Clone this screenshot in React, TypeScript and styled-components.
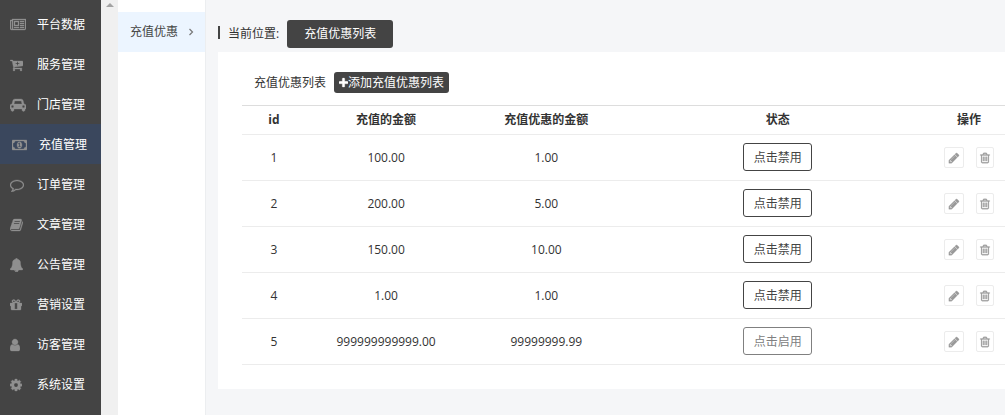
import React from "react";
import styled, { createGlobalStyle } from "styled-components";

const GlobalStyle = createGlobalStyle`
  *, *::before, *::after { box-sizing: border-box; }
  body {
    margin: 0;
    background: #f5f6f8;
    color: #333;
    font: 12px/20px "Open Sans", "Noto Sans CJK SC", sans-serif;
  }
  button { font: inherit; cursor: pointer; }
  a { color: inherit; text-decoration: none; }
`;

type Glyph = { x?: number; w: number; d: string };

const glyphs: Record<string, Glyph> = {
  newspaper: { w: 2048, d: "M1024 512h-384v384h384v-384zm128 640v128h-640v-128h640zm0-768v640h-640v-640h640zm640 768v128h-512v-128h512zm0-256v128h-512v-128h512zm0-256v128h-512v-128h512zm0-256v128h-512v-128h512zm-1536 960v-960h-128v960q0 26 19 45t45 19 45-19 19-45zm1664 0v-1088h-1536v1088q0 33-11 64h1483q26 0 45-19t19-45zm128-1216v1216q0 80-56 136t-136 56h-1664q-80 0-136-56t-56-136v-1088h256v-128h1792z" },
  cart: { x: 64, w: 1664, d: "M1280 704q0-26-19-45t-45-19h-128v-128q0-26-19-45t-45-19-45 19-19 45v128h-128q-26 0-45 19t-19 45 19 45 45 19h128v128q0 26 19 45t45 19 45-19 19-45v-128h128q26 0 45-19t19-45zm-576 832q0 53-37.5 90.5t-90.5 37.5-90.5-37.5-37.5-90.5 37.5-90.5 90.5-37.5 90.5 37.5 37.5 90.5zm896 0q0 53-37.5 90.5t-90.5 37.5-90.5-37.5-37.5-90.5 37.5-90.5 90.5-37.5 90.5 37.5 37.5 90.5zm128-1088v512q0 24-16.5 42.5t-40.5 21.5l-1044 122q13 60 13 70 0 16-24 64h920q26 0 45 19t19 45-19 45-45 19h-1024q-26 0-45-19t-19-45q0-11 8-31.5t16-36 21.5-40 15.5-29.5l-177-823h-204q-26 0-45-19t-19-45 19-45 45-19h256q16 0 28.5 6.5t19.5 15.5 13 24.5 8 26 5.5 29.5 4.5 26h1201q26 0 45 19t19 45z" },
  car: { w: 2048, d: "M480 1088q0-66-47-113t-113-47-113 47-47 113 47 113 113 47 113-47 47-113zm36-320h1016l-89-357q-2-8-14-17.5t-21-9.5h-768q-9 0-21 9.5t-14 17.5zm1372 320q0-66-47-113t-113-47-113 47-47 113 47 113 113 47 113-47 47-113zm160-96v384q0 14-9 23t-23 9h-96v128q0 80-56 136t-136 56-136-56-56-136v-128h-1024v128q0 80-56 136t-136 56-136-56-56-136v-128h-96q-14 0-23-9t-9-23v-384q0-93 65.5-158.5t158.5-65.5h28l105-419q23-94 104-157.5t179-63.5h768q98 0 179 63.5t104 157.5l105 419h28q93 0 158.5 65.5t65.5 158.5z" },
  money: { w: 1920, d: "M768 1152h384v-96h-128v-448h-114l-148 137 77 80q42-37 55-57h2v288h-128v96zm512-256q0 70-21 142t-59.5 134-101.5 101-138 39-138-39-101.5-101-59.5-134-21-142 21-142 59.5-134 101.5-101 138-39 138 39 101.5 101 59.5 134 21 142zm512 256v-512q-106 0-181-75t-75-181h-1152q0 106-75 181t-181 75v512q106 0 181 75t75 181h1152q0-106 75-181t181-75zm128-832v1152q0 26-19 45t-45 19h-1792q-26 0-45-19t-19-45v-1152q0-26 19-45t45-19h1792q26 0 45 19t19 45z" },
  comment: { w: 1792, d: "M896 384q-204 0-381.5 69.5t-282 187.5-104.5 255q0 112 71.5 213.5t201.5 175.5l87 50-27 96q-24 91-70 172 152-63 275-171l43-38 57 6q69 8 130 8 204 0 381.5-69.5t282-187.5 104.5-255-104.5-255-282-187.5-381.5-69.5zm896 512q0 174-120 321.5t-326 233-450 85.5q-70 0-145-8-198 175-460 242-49 14-114 22h-5q-15 0-27-10.5t-16-27.5v-1q-3-4-.5-12t2-10 4.5-9.5l6-9 7-8.5 8-9q7-8 31-34.5t34.5-38 31-39.5 32.5-51 27-59 26-76q-157-89-247.5-220t-90.5-281q0-130 71-248.5t191-204.5 286-136.5 348-50.5 348 50.5 286 136.5 191 204.5 71 248.5z" },
  book: { x: 64, w: 1664, d: "M1703 478q40 57 18 129l-275 906q-19 64-76.5 107.5t-122.5 43.5h-923q-77 0-148.5-53.5t-99.5-131.5q-24-67-2-127 0-4 3-27t4-37q1-8-3-21.5t-3-19.5q2-11 8-21t16.5-23.5 16.5-23.5q23-38 45-91.5t30-91.5q3-10 .5-30t-.5-28q3-11 17-28t17-23q21-36 42-92t25-90q1-9-2.5-32t.5-28q4-13 22-30.5t22-22.5q19-26 42.5-84.5t27.5-96.5q1-8-3-25.5t-2-26.5q2-8 9-18t18-23 17-21q8-12 16.5-30.5t15-35 16-36 19.5-32 26.5-23.5 36-11.5 47.5 5.5l-1 3q38-9 51-9h761q74 0 114 56t18 130l-274 906q-36 119-71.5 153.5t-128.5 34.5h-869q-27 0-38 15-11 16-1 43 24 70 144 70h923q29 0 56-15.5t35-41.5l300-987q7-22 5-57 38 15 59 43zm-1064 2q-4 13 2 22.5t20 9.5h608q13 0 25.5-9.5t16.5-22.5l21-64q4-13-2-22.5t-20-9.5h-608q-13 0-25.5 9.5t-16.5 22.5zm-83 256q-4 13 2 22.5t20 9.5h608q13 0 25.5-9.5t16.5-22.5l21-64q4-13-2-22.5t-20-9.5h-608q-13 0-25.5 9.5t-16.5 22.5z" },
  bell: { x: 64, w: 1664, d: "M912 1696q0-16-16-16-59 0-101.5-42.5t-42.5-101.5q0-16-16-16t-16 16q0 73 51.5 124.5t124.5 51.5q16 0 16-16zm816-288q0 52-38 90t-90 38h-448q0 106-75 181t-181 75-181-75-75-181h-448q-52 0-90-38t-38-90q50-42 91-88t85-119.5 74.5-158.5 50-206 19.5-260q0-152 117-282.5t307-158.5q-8-19-8-39 0-40 28-68t68-28 68 28 28 68q0 20-8 39 190 28 307 158.5t117 282.5q0 139 19.5 260t50 206 74.5 158.5 85 119.5 91 88z" },
  gift: { x: 128, w: 1536, d: "M1056 1356v-716h-320v716q0 25 18 38.5t46 13.5h192q28 0 46-13.5t18-38.5zm-456-844h195l-126-161q-26-31-69-31-40 0-68 28t-28 68 28 68 68 28zm688-96q0-40-28-68t-68-28q-43 0-69 31l-125 161h194q40 0 68-28t28-68zm376 256v320q0 14-9 23t-23 9h-96v416q0 40-28 68t-68 28h-1088q-40 0-68-28t-28-68v-416h-96q-14 0-23-9t-9-23v-320q0-14 9-23t23-9h440q-93 0-158.5-65.5t-65.5-158.5 65.5-158.5 158.5-65.5q107 0 168 77l128 165 128-165q61-77 168-77 93 0 158.5 65.5t65.5 158.5-65.5 158.5-158.5 65.5h440q14 0 23 9t9 23z" },
  user: { x: 256, w: 1280, d: "M1536 1399q0 109-62.5 187t-150.5 78h-854q-88 0-150.5-78t-62.5-187q0-85 8.5-160.5t31.5-152 58.5-131 94-89 134.5-34.5q131 128 313 128t313-128q76 0 134.5 34.5t94 89 58.5 131 31.5 152 8.5 160.5zm-256-887q0 159-112.5 271.5t-271.5 112.5-271.5-112.5-112.5-271.5 112.5-271.5 271.5-112.5 271.5 112.5 112.5 271.5z" },
  cog: { x: 128, w: 1536, d: "M1152 896q0-106-75-181t-181-75-181 75-75 181 75 181 181 75 181-75 75-181zm512-109v222q0 12-8 23t-20 13l-185 28q-19 54-39 91 35 50 107 138 10 12 10 25t-9 23q-27 37-99 108t-94 71q-12 0-26-9l-138-108q-44 23-91 38-16 136-29 186-7 28-36 28h-222q-14 0-24.5-8.5t-11.5-21.5l-28-184q-49-16-90-37l-141 107q-10 9-25 9-14 0-25-11-126-114-165-168-7-10-7-23 0-12 8-23 15-21 51-66.5t54-70.5q-27-50-41-99l-183-27q-13-2-21-12.5t-8-23.5v-222q0-12 8-23t19-13l186-28q14-46 39-92-40-57-107-138-10-12-10-24 0-10 9-23 26-36 98.5-107.5t94.5-71.5q13 0 26 10l138 107q44-23 91-38 16-136 29-186 7-28 36-28h222q14 0 24.5 8.5t11.5 21.5l28 184q49 16 90 37l142-107q9-9 24-9 13 0 25 10 129 119 165 170 7 8 7 22 0 12-8 23-15 21-51 66.5t-54 70.5q26 50 41 98l183 28q13 2 21 12.5t8 23.5z" },
  pencil: { w: 1792, d: "M491 1536l91-91-235-235-91 91v107h128v128h107zm523-928q0-22-22-22-10 0-17 7l-542 542q-7 7-7 17 0 22 22 22 10 0 17-7l542-542q7-7 7-17zm-54-192l416 416-832 832h-416v-416zm683 96q0 53-37 90l-166 166-416-416 166-165q36-38 90-38 53 0 91 38l235 234q37 39 37 91z" },
  trash: { w: 1792, d: "M704 736v576q0 14-9 23t-23 9h-64q-14 0-23-9t-9-23v-576q0-14 9-23t23-9h64q14 0 23 9t9 23zm256 0v576q0 14-9 23t-23 9h-64q-14 0-23-9t-9-23v-576q0-14 9-23t23-9h64q14 0 23 9t9 23zm256 0v576q0 14-9 23t-23 9h-64q-14 0-23-9t-9-23v-576q0-14 9-23t23-9h64q14 0 23 9t9 23zm128 724v-948h-896v948q0 22 7 40.5t14.5 27 10.5 8.5h832q3 0 10.5-8.5t14.5-27 7-40.5zm-672-1076h448l-48-117q-7-9-17-11h-317q-10 2-17 11zm928 32v64q0 14-9 23t-23 9h-96v948q0 83-47 143.5t-113 60.5h-832q-66 0-113-58.5t-47-141.5v-952h-96q-14 0-23-9t-9-23v-64q0-14 9-23t23-9h309l70-167q15-37 54-63t79-26h320q40 0 79 26t54 63l70 167h309q14 0 23 9t9 23z" },
  plus: { x: 192, w: 1408, d: "M1600 736v192q0 40-28 68t-68 28h-416v416q0 40-28 68t-68 28h-192q-40 0-68-28t-28-68v-416h-416q-40 0-68-28t-28-68v-192q0-40 28-68t68-28h416v-416q0-40 28-68t68-28h192q40 0 68 28t28 68v416h416q40 0 68 28t28 68z" },
};

const Svg = styled.svg`
  display: block;
  flex: none;
  fill: currentColor;
`;

function Icon({ name, size = 14 }: { name: string; size?: number }) {
  const { x = 0, w, d } = glyphs[name];
  return (
    <Svg
      width={Math.round((w / 1792) * size)}
      height={size}
      viewBox={`${x} 0 ${w} 1792`}
      aria-hidden="true"
    >
      <path d={d} stroke="currentColor" strokeWidth="40" />
    </Svg>
  );
}

const Layout = styled.div`
  display: flex;
  min-height: 100vh;
`;

const Sidebar = styled.nav`
  flex: none;
  width: 101px;
  padding-top: 4px;
  background: #444;
`;

const NavItem = styled.a<{ $active?: boolean }>`
  display: flex;
  align-items: center;
  height: 40px;
  padding-top: 2px;
  padding-left: ${(p) => (p.$active ? 12 : 10)}px;
  background: ${(p) => (p.$active ? "#3a475d" : "transparent")};
  color: #fff;
`;

const NavIcon = styled.span`
  flex: none;
  width: 27px;
  color: #8f8f8f;
`;

const ScrollTrack = styled.div`
  flex: none;
  display: flex;
  justify-content: center;
  width: 17px;
  padding-top: 3px;
  background: #f0f0f0;
  color: #a3a3a3;
`;

const SubMenu = styled.nav`
  flex: none;
  width: 88px;
  padding-top: 12px;
  background: #fff;
  border-right: 1px solid #eceef0;
`;

const SubItem = styled.a`
  display: flex;
  align-items: center;
  justify-content: space-between;
  height: 40px;
  padding: 0 11px 0 12px;
  background: #ecf5ff;
  color: #444;
`;

const Main = styled.main`
  flex: 1;
  min-width: 0;
  padding: 20px 0 26px 12px;
`;

const Crumbs = styled.div`
  display: flex;
  align-items: center;
  height: 28px;
  margin-bottom: 4px;
`;

const CrumbBar = styled.span`
  width: 2px;
  height: 13px;
  margin-right: 8px;
  margin-bottom: 4px;
  background: #444;
`;

const CrumbTag = styled.button`
  height: 28px;
  margin-left: 8px;
  padding: 0 17px;
  border: 0;
  border-radius: 3px;
  background: #444;
  color: #fff;
`;

const Card = styled.section`
  padding: 20px 0 24px 24px;
  background: #fff;
`;

const CardHead = styled.div`
  display: flex;
  align-items: center;
  height: 21px;
  margin-bottom: 12px;
  padding-left: 12px;
`;

const Title = styled.h1`
  margin: 0;
  font-size: 12px;
  font-weight: 400;
`;

const AddButton = styled.button`
  display: flex;
  align-items: center;
  height: 21px;
  margin-left: 8px;
  padding: 0 5px;
  border: 0;
  border-radius: 3px;
  background: #444;
  color: #fff;
`;

const Table = styled.table`
  width: 100%;
  table-layout: fixed;
  border-collapse: collapse;
  text-align: center;

  th {
    height: 29px;
    padding: 0;
    border-top: 1px solid #ddd;
    border-bottom: 1px solid #ececec;
    font-weight: 700;
  }
  td {
    height: 46px;
    padding: 0;
    border-bottom: 1px solid #ececec;
  }
  th:last-child, td:last-child {
    padding-left: 4px;
  }
`;

const Col = styled.col<{ $w: string }>`
  width: ${(p) => p.$w};
`;

const StatusButton = styled.button<{ $off?: boolean }>`
  display: inline-block;
  width: 69px;
  height: 28px;
  margin-bottom: 2px;
  padding: 2px 0 0;
  border: 1px solid ${(p) => (p.$off ? "#808080" : "#444")};
  border-radius: 3px;
  background: #fff;
  color: ${(p) => (p.$off ? "#808080" : "#444")};
  vertical-align: middle;
`;

const Actions = styled.div`
  display: flex;
  justify-content: center;
  gap: 12px;
`;

const IconButton = styled.button<{ $w: number }>`
  display: flex;
  align-items: center;
  justify-content: center;
  width: ${(p) => p.$w}px;
  height: 21px;
  padding: 0;
  border: 1px solid #ececec;
  border-radius: 2px;
  background: #fff;
  color: #999;
`;

const nav = [
  ["newspaper", "平台数据"],
  ["cart", "服务管理"],
  ["car", "门店管理"],
  ["money", "充值管理"],
  ["comment", "订单管理"],
  ["book", "文章管理"],
  ["bell", "公告管理"],
  ["gift", "营销设置"],
  ["user", "访客管理"],
  ["cog", "系统设置"],
];

const rows = [
  { id: 1, amount: "100.00", bonus: "1.00", enabled: true },
  { id: 2, amount: "200.00", bonus: "5.00", enabled: true },
  { id: 3, amount: "150.00", bonus: "10.00", enabled: true },
  { id: 4, amount: "1.00", bonus: "1.00", enabled: true },
  { id: 5, amount: "999999999999.00", bonus: "99999999.99", enabled: false },
];

export default function App() {
  return (
    <>
      <GlobalStyle />
      <Layout>
        <Sidebar>
          {nav.map(([icon, label]) => (
            <NavItem key={label} href="#" $active={label === "充值管理"}>
              <NavIcon>
                <Icon name={icon} />
              </NavIcon>
              {label}
            </NavItem>
          ))}
        </Sidebar>
        <ScrollTrack>
          <Svg width="8" height="4" viewBox="0 0 8 4" aria-hidden="true">
            <path d="M0 4L4 0l4 4z" />
          </Svg>
        </ScrollTrack>
        <SubMenu>
          <SubItem href="#">
            充值优惠
            <Svg width="6" height="8" viewBox="0 0 6 8" aria-hidden="true">
              <path d="M1.5 1L4.5 4l-3 3" fill="none" stroke="#777" strokeWidth="1.2" />
            </Svg>
          </SubItem>
        </SubMenu>
        <Main>
          <Crumbs>
            <CrumbBar />
            当前位置:
            <CrumbTag type="button">充值优惠列表</CrumbTag>
          </Crumbs>
          <Card>
            <CardHead>
              <Title>充值优惠列表</Title>
              <AddButton type="button">
                <Icon name="plus" size={12} />
                添加充值优惠列表
              </AddButton>
            </CardHead>
            <Table>
              <colgroup>
                <Col $w="64px" />
                <Col $w="21%" />
                <Col $w="21%" />
                <Col $w="auto" />
                <Col $w="76px" />
              </colgroup>
              <thead>
                <tr>
                  <th>id</th>
                  <th>充值的金额</th>
                  <th>充值优惠的金额</th>
                  <th>状态</th>
                  <th>操作</th>
                </tr>
              </thead>
              <tbody>
                {rows.map((r) => (
                  <tr key={r.id}>
                    <td>{r.id}</td>
                    <td>{r.amount}</td>
                    <td>{r.bonus}</td>
                    <td>
                      <StatusButton type="button" $off={!r.enabled}>
                        {r.enabled ? "点击禁用" : "点击启用"}
                      </StatusButton>
                    </td>
                    <td>
                      <Actions>
                        <IconButton type="button" $w={20} aria-label="编辑">
                          <Icon name="pencil" size={12} />
                        </IconButton>
                        <IconButton type="button" $w={18} aria-label="删除">
                          <Icon name="trash" size={12} />
                        </IconButton>
                      </Actions>
                    </td>
                  </tr>
                ))}
              </tbody>
            </Table>
          </Card>
        </Main>
      </Layout>
    </>
  );
}
